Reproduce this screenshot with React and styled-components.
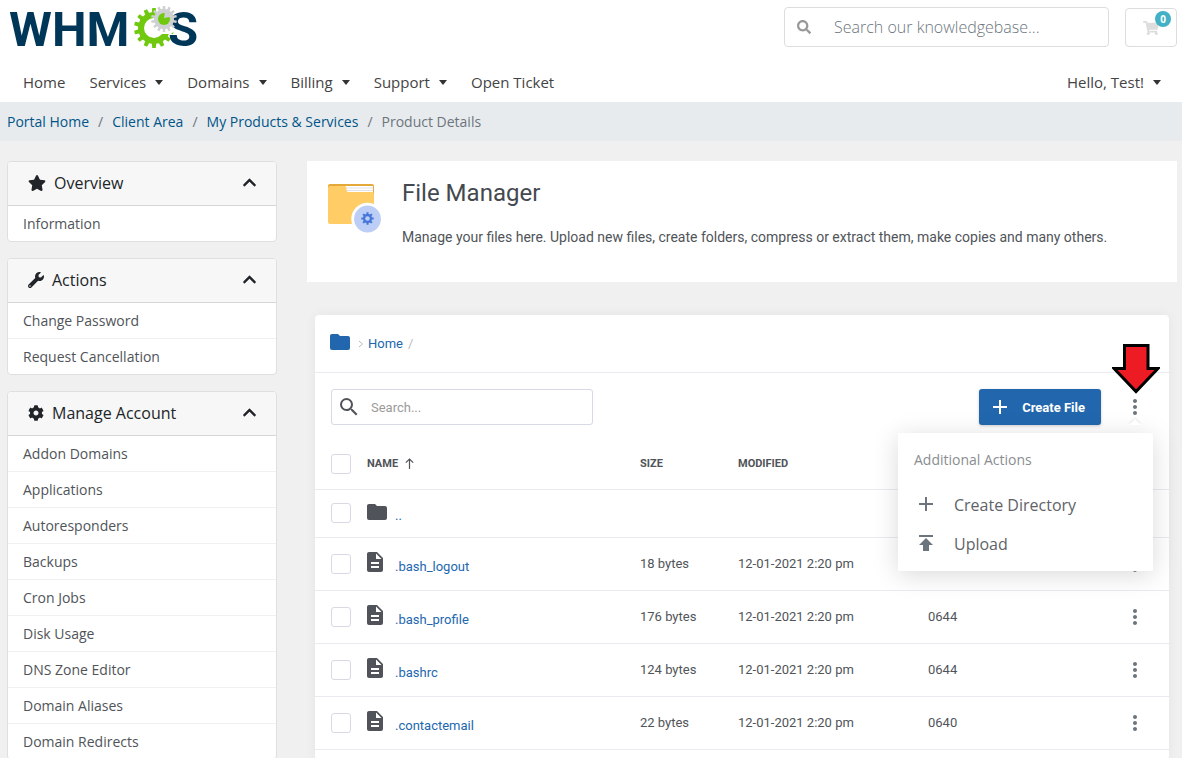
import React from 'react';
import styled, { createGlobalStyle, css } from 'styled-components';
import { FaStar, FaWrench, FaCog, FaChevronUp, FaSearch, FaShoppingCart } from 'react-icons/fa';
import { MdAdd, MdMoreVert, MdPublish, MdSearch } from 'react-icons/md';

const openSans = '"Open Sans", "Noto Sans", sans-serif';
const roboto = 'Roboto, "Liberation Sans", sans-serif';

const color = {
  page: '#f0f0f0',
  bar: '#e8ebee',
  border: '#dfdfdf',
  line: '#e9ebf0',
  field: '#d7d9e5',
  link: '#005588',
  blue: '#2267ae',
  dark: '#212529',
  text: '#505459',
  muted: '#6c757d',
};

const GlobalStyle = createGlobalStyle`
  *, *::before, *::after {
    box-sizing: border-box;
  }
  body {
    margin: 0;
    background: ${color.page};
    color: ${color.dark};
    font-family: ${openSans};
    font-size: 16px;
    line-height: 24px;
  }
  a {
    color: inherit;
    text-decoration: none;
  }
  button, input {
    font-family: inherit;
  }
`;

/* ---------- header ---------- */

const Header = styled.header`
  background: #fff;
`;

const TopBar = styled.div`
  display: flex;
  align-items: flex-start;
  justify-content: space-between;
  padding: 0 5px 0 7px;
`;

const LogoLink = styled.a`
  display: flex;
  svg {
    display: block;
  }
`;

const TopTools = styled.div`
  display: flex;
  align-items: flex-end;
  gap: 16px;
  padding-top: 7px;
`;

const SiteSearch = styled.form`
  display: flex;
  align-items: center;
  width: 325px;
  height: 40px;
  border: 1px solid #ddd;
  border-radius: 4px;
  background: #fff;
`;

const SiteSearchButton = styled.button`
  display: flex;
  padding: 0 12px;
  border: 0;
  background: none;
  color: #999;
`;

const SiteSearchInput = styled.input`
  flex: 1;
  min-width: 0;
  padding: 0 11px;
  border: 0;
  outline: 0;
  background: none;
  font-size: 16px;
  font-weight: 300;
  &::placeholder {
    color: ${color.muted};
    opacity: 1;
  }
`;

const CartButton = styled.a`
  position: relative;
  display: flex;
  align-items: center;
  justify-content: center;
  width: 52px;
  height: 39px;
  border: 1px solid #ddd;
  border-radius: 4px;
  color: #ddd;
`;

const CartBadge = styled.span`
  position: absolute;
  top: 2px;
  right: 5px;
  width: 16px;
  height: 16px;
  border-radius: 50%;
  background: #42b0c5;
  color: #fff;
  font-size: 10px;
  font-weight: 700;
  line-height: 16px;
  text-align: center;
`;

const Nav = styled.nav`
  display: flex;
  gap: 24px;
  padding: 10px 21px 8px 23px;
`;

const NavLink = styled.a`
  display: flex;
  align-items: center;
  color: #444;
  font-size: 15px;
  ${props => props.$end && css`
    margin-left: auto;
  `}
  ${props => props.$caret && css`
    &::after {
      content: '';
      margin-left: 9px;
      border: 4px solid transparent;
      border-top: 5px solid #333;
      border-bottom: 0;
    }
  `}
`;

const Breadcrumb = styled.ol`
  display: flex;
  margin: 0;
  padding: 8px 7px 7px;
  list-style: none;
  background: ${color.bar};
  color: ${color.muted};
  font-size: 14px;
`;

const Crumb = styled.li`
  a {
    color: ${color.link};
  }
  & + &::before {
    content: '/';
    padding: 0 9px;
    color: ${color.muted};
  }
`;

/* ---------- sidebar ---------- */

const Columns = styled.div`
  display: flex;
  gap: 30px;
  padding: 20px 5px 0 7px;
`;

const Sidebar = styled.aside`
  flex: 0 0 270px;
  display: flex;
  flex-direction: column;
  gap: 16px;
`;

const Card = styled.section`
  border: 1px solid ${color.border};
  border-radius: 4px;
  background: #fff;
  overflow: hidden;
`;

const CardHead = styled.button`
  display: flex;
  align-items: center;
  gap: 8px;
  width: 100%;
  height: 44px;
  padding: 0 19px 2px 20px;
  border: 0;
  border-bottom: 1px solid #d6d6d6;
  background: #f7f7f7;
  color: ${color.dark};
  font-size: 16px;
  text-align: left;
  svg:last-child {
    margin-left: auto;
  }
`;

const CardList = styled.ul`
  margin: 0;
  padding: 0;
  list-style: none;
`;

const CardItem = styled.li`
  & + & {
    border-top: 1px solid #f0f0f0;
  }
  a {
    display: block;
    height: 35px;
    padding: 0 15px;
    color: ${color.text};
    font-size: 14px;
    line-height: 35px;
  }
`;

/* ---------- file manager ---------- */

const Main = styled.main`
  flex: 1;
  min-width: 0;
  display: flex;
  flex-direction: column;
  gap: 33px;
  font-family: ${roboto};
`;

const Intro = styled.section`
  display: flex;
  gap: 20px;
  padding: 18px 21px 33px;
  background: #fff;
  svg {
    flex: none;
    margin-top: 5px;
  }
  h1 {
    margin: 0;
    color: #444950;
    font-size: 24px;
    font-weight: 400;
    line-height: 28px;
  }
  p {
    margin: 18px 0 0;
    color: ${color.text};
    font-size: 14px;
    line-height: 24px;
  }
`;

const Manager = styled.section`
  flex: 1;
  margin: 0 8px;
  border-radius: 4px;
  background: #fff;
  box-shadow: 0 0 12px rgba(0, 0, 0, 0.05);
`;

const PathBar = styled.div`
  display: flex;
  align-items: center;
  height: 58px;
  padding: 0 15px;
  border-bottom: 1px solid ${color.line};
  color: #bbb;
  font-size: 13px;
  svg:first-child {
    margin: 0 8px 4px 0;
    color: ${color.blue};
  }
  a {
    margin: 0 5px 0 4px;
    color: ${color.blue};
  }
`;

const Toolbar = styled.div`
  display: flex;
  align-items: center;
  padding: 16px 22px 14px 16px;
`;

const FileSearch = styled.label`
  display: flex;
  align-items: center;
  width: 262px;
  height: 36px;
  padding: 0 5px;
  border: 1px solid ${color.field};
  border-radius: 3px;
  color: ${color.text};
`;

const FileSearchInput = styled.input`
  flex: 1;
  min-width: 0;
  padding: 0 10px;
  border: 0;
  outline: 0;
  background: none;
  font-size: 13px;
  &::placeholder {
    color: #9a9a9a;
    opacity: 1;
  }
`;

const CreateButton = styled.button`
  display: flex;
  align-items: center;
  gap: 10px;
  height: 36px;
  margin-left: auto;
  padding: 0 16px 0 9px;
  border: 0;
  border-radius: 3px;
  background: ${color.blue};
  box-shadow: 0 1px 3px rgba(0, 0, 0, 0.2);
  color: #fff;
  font-size: 13px;
  font-weight: 700;
`;

const More = styled.div`
  position: relative;
  margin-left: 22px;
`;

const IconButton = styled.button`
  display: inline-flex;
  padding: 0;
  border: 0;
  background: none;
  color: ${color.muted};
  vertical-align: middle;
`;

const Menu = styled.div`
  position: absolute;
  top: 38px;
  right: -6px;
  z-index: 1;
  width: 255px;
  padding: 15px 16px 7px;
  background: #fff;
  box-shadow: 0 4px 24px rgba(0, 0, 0, 0.15);
  font-family: ${openSans};
  &::before {
    content: '';
    position: absolute;
    top: -14px;
    right: 12px;
    border: 6px solid transparent;
    border-top: 0;
    border-bottom-color: #fff;
    filter: drop-shadow(0 -1px 1px rgba(0, 0, 0, 0.1));
  }
`;

const MenuTitle = styled.div`
  margin-bottom: 14px;
  color: #8a8d91;
  font-size: 14px;
`;

const MenuItem = styled.button`
  display: flex;
  align-items: center;
  gap: 16px;
  width: 100%;
  height: 39px;
  padding: 0;
  border: 0;
  background: none;
  color: ${color.muted};
  font-size: 16px;
  svg {
    margin-bottom: 3px;
  }
  span {
    color: #5f6368;
  }
`;

const Pointer = styled.svg`
  position: absolute;
  top: -51px;
  left: -11px;
`;

const Table = styled.table`
  width: 100%;
  border-collapse: collapse;
  table-layout: fixed;
  color: ${color.text};
  font-size: 13px;
  text-align: left;
  th, td {
    padding: 0;
    border-bottom: 1px solid ${color.line};
  }
  th {
    height: 50px;
    font-size: 11px;
    font-weight: 700;
  }
  td {
    height: 53px;
  }
`;

const Col = styled.col`
  width: ${props => props.$width}px;
`;

const Row = styled.tr`
  ${props => props.$parent && css`
    && td {
      height: 48px;
    }
  `}
`;

const CheckCell = styled.td`
  && {
    padding-left: 16px;
  }
`;

const ActionCell = styled.td`
  && {
    text-align: center;
  }
`;

const Sortable = styled.span`
  display: flex;
  align-items: center;
  gap: 7px;
`;

const Checkbox = styled.input`
  appearance: none;
  display: block;
  width: 20px;
  height: 20px;
  margin: 0;
  border: 1px solid ${color.field};
  border-radius: 3px;
  background: #fff;
`;

const FileLink = styled.a`
  display: flex;
  align-items: center;
  color: ${color.blue};
  svg {
    flex: none;
    margin-bottom: 3px;
    color: #50545a;
  }
  span {
    padding-top: 6px;
  }
`;

const IconSlot = styled.span`
  display: flex;
  width: 28px;
  && {
    padding: 0;
  }
`;

/* ---------- drawings ---------- */

// outline of a cog wheel with straight-sided teeth
function gearPath(cx, cy, outer, inner, teeth) {
  const step = (Math.PI * 2) / teeth;
  const pts = [];
  for (let i = 0; i < teeth; i++) {
    [[-0.3, inner], [-0.2, outer], [0.2, outer], [0.3, inner]].forEach(([k, r]) => {
      const a = (i + k) * step - Math.PI / 2;
      pts.push(`${(cx + r * Math.cos(a)).toFixed(2)} ${(cy + r * Math.sin(a)).toFixed(2)}`);
    });
  }
  return `M${pts.join('L')}Z`;
}

const LogoText = styled.text`
  fill: #003658;
  font-family: ${roboto};
  font-size: 49px;
  font-weight: 700;
`;

function Logo() {
  return (
    <svg width="194" height="60" viewBox="7 0 194 60" role="img" aria-label="WHMCS">
      <LogoText x="9" y="46">WHM</LogoText>
      <path d={gearPath(154, 28, 20, 16, 14)} fill="#70c80f" />
      <circle cx="154" cy="28" r="10" fill="#fff" />
      <path d="M154 18L178 14L176 30Q172 33 171 34L162 34Z" fill="#fff" />
      <LogoText x="168" y="46">S</LogoText>
      <path d={gearPath(164, 19, 13, 10, 14)} fill="#cfd0d1" />
      <circle cx="164" cy="19" r="6" fill="#70c80f" />
      <path d="M164 18L165 12L171 13L170 17Z" fill="#cfd0d1" />
    </svg>
  );
}

function ManagerIcon() {
  return (
    <svg width="54" height="50" viewBox="0 0 54 50" aria-hidden="true">
      <path d="M2 0H44a2 2 0 0 1 2 2V12H0V2a2 2 0 0 1 2-2Z" fill="#e5a93a" />
      <path d="M17 2H45V9H17Z" fill="#fff" />
      <path d="M17 4H45M17 6.5H45" stroke="#dfe2ec" strokeWidth="1" />
      <path d="M0 4a2 2 0 0 1 2-2H16q2.500 0 2.500 3v1q0 2 2 2H44a2 2 0 0 1 2 2V38a2 2 0 0 1-2 2H2a2 2 0 0 1-2-2Z" fill="#ffcc66" />
      <circle cx="39.500" cy="35" r="16.200" fill="#fff" />
      <circle cx="39.500" cy="35" r="13.400" fill="#bccdf6" />
      <path d={gearPath(39.5, 34.5, 6.3, 4.6, 8)} fill="#4476d9" />
      <circle cx="39.500" cy="34.500" r="2.300" fill="#bccdf6" />
    </svg>
  );
}

const FolderIcon = () => (
  <svg width="20" height="16" viewBox="2 4 20 16" fill="currentColor" aria-hidden="true">
    <path d="M10 4H4c-1.110 0-2 .89-2 2v12a2 2 0 0 0 2 2h16a2 2 0 0 0 2-2V8c0-1.110-.9-2-2-2h-8l-2-2Z" />
  </svg>
);

const DocumentIcon = () => (
  <svg width="16" height="20" viewBox="4 2 16 20" fill="currentColor" aria-hidden="true">
    <path d="M14 2H6c-1.100 0-2 .9-2 2v16c0 1.100.9 2 2 2h12c1.100 0 2-.9 2-2V8l-6-6Zm2 16H8v-2h8v2Zm0-4H8v-2h8v2Zm-3-5V3.500L18.500 9H13Z" />
  </svg>
);

const ArrowUp = () => (
  <svg width="9" height="12" viewBox="0 0 9 12" fill="none" stroke="currentColor" strokeWidth="1.2" aria-hidden="true">
    <path d="M4.500 11V1M.8 4.700L4.500 1L8.200 4.700" />
  </svg>
);

const Angle = () => (
  <svg width="6" height="8" viewBox="0 0 6 8" fill="none" stroke="currentColor" aria-hidden="true">
    <path d="M1 1L4.500 4L1 7" />
  </svg>
);

/* ---------- data ---------- */

const navLinks = [
  { label: 'Home' },
  { label: 'Services', caret: true },
  { label: 'Domains', caret: true },
  { label: 'Billing', caret: true },
  { label: 'Support', caret: true },
  { label: 'Open Ticket' },
];

const panels = [
  { title: 'Overview', icon: <FaStar size={18} />, items: ['Information'] },
  { title: 'Actions', icon: <FaWrench size={16} />, items: ['Change Password', 'Request Cancellation'] },
  {
    title: 'Manage Account',
    icon: <FaCog size={16} />,
    items: [
      'Addon Domains',
      'Applications',
      'Autoresponders',
      'Backups',
      'Cron Jobs',
      'Disk Usage',
      'DNS Zone Editor',
      'Domain Aliases',
      'Domain Redirects',
    ],
  },
];

const files = [
  { name: '.bash_logout', size: '18 bytes', modified: '12-01-2021 2:20 pm', mode: '0644' },
  { name: '.bash_profile', size: '176 bytes', modified: '12-01-2021 2:20 pm', mode: '0644' },
  { name: '.bashrc', size: '124 bytes', modified: '12-01-2021 2:20 pm', mode: '0644' },
  { name: '.contactemail', size: '22 bytes', modified: '12-01-2021 2:20 pm', mode: '0640' },
];

function App() {
  return (
    <>
      <GlobalStyle />
      <Header>
        <TopBar>
          <LogoLink href="#"><Logo /></LogoLink>
          <TopTools>
            <SiteSearch>
              <SiteSearchButton type="button" aria-label="Search"><FaSearch size={14} /></SiteSearchButton>
              <SiteSearchInput type="text" aria-label="Search our knowledgebase" placeholder="Search our knowledgebase..." />
            </SiteSearch>
            <CartButton href="#" aria-label="Shopping cart">
              <FaShoppingCart size={16} />
              <CartBadge>0</CartBadge>
            </CartButton>
          </TopTools>
        </TopBar>
        <Nav>
          {navLinks.map(link => (
            <NavLink key={link.label} href="#" $caret={link.caret}>{link.label}</NavLink>
          ))}
          <NavLink href="#" $caret $end>Hello, Test!</NavLink>
        </Nav>
      </Header>
      <Breadcrumb>
        <Crumb><a href="#">Portal Home</a></Crumb>
        <Crumb><a href="#">Client Area</a></Crumb>
        <Crumb><a href="#">My Products &amp; Services</a></Crumb>
        <Crumb>Product Details</Crumb>
      </Breadcrumb>
      <Columns>
        <Sidebar>
          {panels.map(panel => (
            <Card key={panel.title}>
              <CardHead type="button">
                {panel.icon}
                {panel.title}
                <FaChevronUp size={15} />
              </CardHead>
              <CardList>
                {panel.items.map(item => (
                  <CardItem key={item}><a href="#">{item}</a></CardItem>
                ))}
              </CardList>
            </Card>
          ))}
        </Sidebar>
        <Main>
          <Intro>
            <ManagerIcon />
            <div>
              <h1>File Manager</h1>
              <p>Manage your files here. Upload new files, create folders, compress or extract them, make copies and many others.</p>
            </div>
          </Intro>
          <Manager>
            <PathBar>
              <FolderIcon />
              <Angle />
              <a href="#">Home</a>
              /
            </PathBar>
            <Toolbar>
              <FileSearch>
                <MdSearch size={24} />
                <FileSearchInput type="text" aria-label="Search files" placeholder="Search..." />
              </FileSearch>
              <CreateButton type="button">
                <MdAdd size={24} />
                Create File
              </CreateButton>
              <More>
                <IconButton type="button" aria-label="Additional actions"><MdMoreVert size={24} /></IconButton>
                <Menu>
                  <MenuTitle>Additional Actions</MenuTitle>
                  <MenuItem type="button"><MdAdd size={24} /><span>Create Directory</span></MenuItem>
                  <MenuItem type="button"><MdPublish size={24} /><span>Upload</span></MenuItem>
                </Menu>
                <Pointer width="48" height="50" viewBox="0 0 48 50" aria-hidden="true">
                  <path d="M12.500 1.500H36V24.500H46L24 47.500L2 24.500H12.500Z" fill="#ed1c24" stroke="#000" strokeWidth="3" />
                </Pointer>
              </More>
            </Toolbar>
            <Table>
              <colgroup>
                <Col $width={52} />
                <col />
                <Col $width={98} />
                <Col $width={190} />
                <Col $width={173} />
                <Col $width={68} />
              </colgroup>
              <thead>
                <tr>
                  <CheckCell as="th"><Checkbox type="checkbox" aria-label="Select all" /></CheckCell>
                  <th><Sortable>NAME <ArrowUp /></Sortable></th>
                  <th>SIZE</th>
                  <th>MODIFIED</th>
                  <th />
                  <th />
                </tr>
              </thead>
              <tbody>
                <Row $parent>
                  <CheckCell><Checkbox type="checkbox" aria-label="Select parent folder" /></CheckCell>
                  <td>
                    <FileLink href="#"><IconSlot><FolderIcon /></IconSlot><span>..</span></FileLink>
                  </td>
                  <td />
                  <td />
                  <td />
                  <td />
                </Row>
                {files.map(file => (
                  <Row key={file.name}>
                    <CheckCell><Checkbox type="checkbox" aria-label={`Select ${file.name}`} /></CheckCell>
                    <td>
                      <FileLink href="#"><IconSlot><DocumentIcon /></IconSlot><span>{file.name}</span></FileLink>
                    </td>
                    <td>{file.size}</td>
                    <td>{file.modified}</td>
                    <td>{file.mode}</td>
                    <ActionCell>
                      <IconButton type="button" aria-label={`Actions for ${file.name}`}><MdMoreVert size={24} /></IconButton>
                    </ActionCell>
                  </Row>
                ))}
              </tbody>
            </Table>
          </Manager>
        </Main>
      </Columns>
    </>
  );
}

export default App;
